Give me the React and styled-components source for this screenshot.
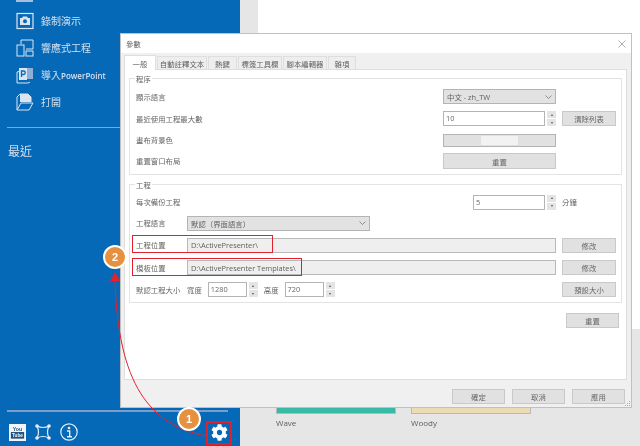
import React from 'react'
import styled, { createGlobalStyle } from 'styled-components'
import { FaCog } from 'react-icons/fa'

const Global = createGlobalStyle`
  html, body { margin: 0; padding: 0; }
  body {
    width: 640px;
    height: 446px;
    overflow: hidden;
    font-family: "Noto Sans CJK TC", "Liberation Sans", sans-serif;
  }
`

const Page = styled.div`
  position: relative;
  display: flex;
  width: 640px;
  height: 446px;
  overflow: hidden;
  background: #e6e6e6;
  filter: blur(0.3px);
`

/* left blue menu */
const Sidebar = styled.aside`
  display: flex;
  flex-direction: column;
  flex: none;
  width: 240px;
  height: 446px;
  background: #0569b7;
  color: #d3e0ef;
`

const Sliver = styled.div`
  width: 17px;
  height: 2px;
  margin: 0 0 5px 16px;
  background: #a9bfd9;
`

const MenuItem = styled.div`
  display: flex;
  align-items: center;
  gap: 7px;
  height: 27px;
  padding-left: 16px;
  font-size: 10px;
`

const Latin = styled.span`
  font-family: "Open Sans", sans-serif;
  font-size: 8px;
  font-weight: 600;
`

const MenuIcon = styled.svg`
  flex: none;
  width: 18px;
  height: 18px;
  fill: none;
  stroke: #dbe5f1;
  stroke-width: 1;
`

const Divider = styled.div`
  height: 1px;
  margin: 12px 0 0 7px;
  background: #7fa6d0;
`

const Recent = styled.div`
  margin: 14px 0 0 8px;
  font-size: 12px;
  line-height: 17px;
`

const Footer = styled.div`
  margin-top: auto;
  padding: 0 12px 0 7px;
`

const FooterLine = styled.div`
  height: 2px;
  background: #7d9cc6;
`

const FooterIcons = styled.div`
  display: flex;
  align-items: center;
  gap: 8px;
  height: 34px;
  padding: 6px 0 0 2px;
  box-sizing: border-box;
`

const FooterIcon = styled.svg`
  flex: none;
  width: 18px;
  height: 18px;
  fill: none;
  stroke: #e6edf6;
`

const YoutubeIcon = styled(FooterIcon)`
  width: 17px;
  height: 17px;
`

const Gear = styled(FaCog)`
  flex: none;
  width: 17px;
  height: 17px;
  margin-left: auto;
  color: #ffffff;
`

/* right area behind the dialog */
const Main = styled.main`
  flex: 1;
`

const WhitePanel = styled.div`
  height: 329px;
  margin-left: 18px;
  background: #ffffff;
`

const Gallery = styled.div`
  display: flex;
  gap: 15px;
  padding-left: 36px;
`

const Card = styled.div`
  width: 120px;
  color: #5c5c5c;
  font-family: "Open Sans", sans-serif;
  font-size: 8px;
`

const Thumb = styled.div`
  height: 85px;
  box-sizing: border-box;
  border: 1px solid #b9b9b9;
  background: ${p => p.$color};
  margin-bottom: 3px;
`

/* preferences dialog */
const Dialog = styled.div`
  position: absolute;
  left: 120px;
  top: 33px;
  display: flex;
  flex-direction: column;
  width: 512px;
  height: 375px;
  box-sizing: border-box;
  border: 1px solid #c0c0c0;
  background: #f0f0f0;
  color: #666666;
  font-size: 7.4px;
`

const TitleBar = styled.div`
  display: flex;
  align-items: center;
  justify-content: space-between;
  flex: none;
  height: 19px;
  padding: 0 5px;
  background: #ffffff;
`

const Close = styled.svg`
  width: 8px;
  height: 8px;
  stroke: #9a9a9a;
  stroke-width: 0.8;
`

const Content = styled.div`
  display: flex;
  flex-direction: column;
  flex: 1;
  padding: 3px 4px 0 3px;
`

const Tabs = styled.div`
  display: flex;
  align-items: flex-end;
  gap: 1px;
  height: 14px;
  margin-bottom: -1px;
  position: relative;
  z-index: 1;
`

const Tab = styled.div`
  display: flex;
  align-items: center;
  justify-content: center;
  box-sizing: border-box;
  width: ${p => p.$w}px;
  height: ${p => (p.$active ? 15 : 14)}px;
  border: 1px solid #dedede;
  border-bottom: ${p => (p.$active ? '0' : '1px solid #dedede')};
  background: ${p => (p.$active ? '#ffffff' : '#eeeeee')};
  color: #5f5f5f;
`

const Pane = styled.div`
  display: flex;
  flex-direction: column;
  height: 311px;
  box-sizing: border-box;
  border: 1px solid #dedede;
  padding: 8px 4px 0;
  background: #ffffff;
`

const Group = styled.section`
  position: relative;
  display: grid;
  grid-template-columns: ${p => p.$cols};
  grid-template-rows: ${p => p.$rows};
  column-gap: 6px;
  row-gap: 6px;
  align-items: center;
  box-sizing: border-box;
  padding: 10px 6px 5px 6px;
  margin-bottom: 9px;
  border: 1px solid #e3e3e3;
`

const Legend = styled.span`
  position: absolute;
  left: 5px;
  top: -5px;
  padding: 0 1px;
  background: #ffffff;
  line-height: 9px;
`

const Label = styled.span`
  white-space: nowrap;
  line-height: 10px;
`

const Control = styled.div`
  box-sizing: border-box;
  display: flex;
  align-items: center;
  justify-content: space-between;
  height: ${p => p.$h || 15}px;
  width: ${p => (p.$w ? `${p.$w}px` : '100%')};
  padding: 0 3px;
  border: 1px solid #b4b4b4;
  background: #e2e2e2;
  color: #5e5e5e;
  font-family: "Open Sans", "Noto Sans CJK TC", sans-serif;
  white-space: nowrap;
`

const PathField = styled(Control)`
  background: #efefef;
  border-color: #b9b9b9;
`

const Button = styled.div`
  box-sizing: border-box;
  display: flex;
  align-items: center;
  justify-content: center;
  height: ${p => p.$h || 15}px;
  width: ${p => (p.$w ? `${p.$w}px` : '100%')};
  border: 1px solid #c9c9c9;
  background: #e1e1e1;
  color: #666666;
`

const ColorField = styled(Button)`
  border-color: #b4b4b4;
`

const ColorSwatch = styled.div`
  width: 37px;
  height: 9px;
  background: #f2f2f2;
`

const SpinWrap = styled.div`
  display: flex;
  gap: 2px;
  justify-self: end;
  flex: none;
  width: ${p => (p.$w ? `${p.$w}px` : '100%')};
`

const SpinInput = styled.div`
  flex: 1;
  box-sizing: border-box;
  height: 15px;
  padding: 0 2px;
  border: 1px solid #b4b4b4;
  background: #ffffff;
  color: #666666;
  font-family: "Open Sans", sans-serif;
  line-height: 12px;
`

const SpinBtns = styled.div`
  display: flex;
  flex-direction: column;
  gap: 1px;
  flex: none;
  width: 9px;
`

const SpinBtn = styled.div`
  height: 7px;
  display: flex;
  align-items: center;
  justify-content: center;
  background: #e4e4e4;

  &::after {
    content: '';
    border-left: 1.5px solid transparent;
    border-right: 1.5px solid transparent;
    border-${p => (p.$down ? 'top' : 'bottom')}: 2px solid #555555;
  }
`

const SizeRow = styled.div`
  display: flex;
  align-items: center;
  gap: 6px;
`

const Bottom = styled.div`
  display: flex;
  justify-content: flex-end;
  gap: 7px;
  padding: 9px 2px 0 0;
`

const ResetRow = styled.div`
  display: flex;
  justify-content: flex-end;
  margin: 1px 3px 0 0;
`

const Grip = styled.svg`
  position: absolute;
  right: 0;
  bottom: 0;
  width: 6px;
  height: 6px;
  fill: #a8a8a8;
`

/* red annotations lying over the screenshot */
const Curve = styled.svg`
  position: absolute;
  left: 0;
  top: 0;
  width: 640px;
  height: 446px;
  pointer-events: none;
`

const RedBox = styled.div`
  position: absolute;
  box-sizing: border-box;
  left: ${p => p.$x}px;
  top: ${p => p.$y}px;
  width: ${p => p.$w}px;
  height: ${p => p.$h}px;
  border: ${p => p.$b || 1}px solid #e0202c;
`

const Badge = styled.div`
  position: absolute;
  left: ${p => p.$x - 12}px;
  top: ${p => p.$y - 12}px;
  display: flex;
  align-items: center;
  justify-content: center;
  box-sizing: border-box;
  width: 24px;
  height: 24px;
  border: 2px solid #ffffff;
  border-radius: 50%;
  background: #e6913f;
  color: #ffffff;
  font-family: "Liberation Sans", sans-serif;
  font-size: 11px;
  font-weight: 700;
`

const Spin = ({ value, width }) => (
  <SpinWrap $w={width}>
    <SpinInput>{value}</SpinInput>
    <SpinBtns>
      <SpinBtn />
      <SpinBtn $down />
    </SpinBtns>
  </SpinWrap>
)

const Chevron = () => (
  <svg width="7" height="4" viewBox="0 0 7 4" fill="none" stroke="#777" strokeWidth="0.8">
    <path d="M0.5 0.5 L3.5 3.5 L6.5 0.5" />
  </svg>
)

const tabs = [
  ['一般', 32],
  ['自動註釋文本', 50],
  ['熱鍵', 29],
  ['標簽工具欄', 44],
  ['腳本編輯器', 44],
  ['雜項', 28],
]

export default function App() {
  return (
    <Page>
      <Global />
      <Sidebar>
        <Sliver />
        <MenuItem>
          <MenuIcon viewBox="0 0 18 18">
            <rect x="1" y="1.500" width="16" height="15" strokeWidth="1.200" />
            <path d="M4 6h2l1-1.500h4l1 1.500h2v7h-10z" fill="#dbe5f1" stroke="none" />
            <circle cx="9" cy="9.300" r="2" fill="#0569b7" stroke="none" />
          </MenuIcon>
          錄制演示
        </MenuItem>
        <MenuItem>
          <MenuIcon viewBox="0 0 18 18">
            <path d="M5 5V1h12v9H10" />
            <rect x="1" y="6" width="7" height="11" fill="#0569b7" />
            <rect x="10" y="12" width="7" height="5" />
          </MenuIcon>
          響應式工程
        </MenuItem>
        <MenuItem>
          <MenuIcon viewBox="0 0 18 18">
            <path d="M5 5L1 6v11h11l2-1" />
            <rect x="3" y="2" width="8" height="12" fill="#dbe5f1" stroke="none" />
            <path d="M11 2h6v11h-6z" fill="#8fb0d6" stroke="none" />
            <path d="M5.500 11V5h2a1.600 1.600 0 0 1 0 3.500h-2" stroke="#0569b7" strokeWidth="1.300" />
          </MenuIcon>
          <span>導入<Latin>PowerPoint</Latin></span>
        </MenuItem>
        <MenuItem>
          <MenuIcon viewBox="0 0 18 18">
            <path d="M1 17V4l3-3h8l3 3v5" />
            <path d="M1 17h12l4-7H5z" />
            <path d="M4 1h8l3 3v5H4z" fill="#dbe5f1" stroke="none" />
          </MenuIcon>
          打開
        </MenuItem>
        <Divider />
        <Recent>最近</Recent>
        <Footer>
          <FooterLine />
          <FooterIcons>
            <YoutubeIcon viewBox="0 0 18 18">
              <rect x="0" y="0" width="18" height="18" fill="#f1f5fa" stroke="none" />
              <text x="9" y="7" fontSize="5.500" fontWeight="700" textAnchor="middle" fill="#23527f" stroke="none" fontFamily="Liberation Sans">You</text>
              <rect x="2" y="8.500" width="14" height="7" fill="#23527f" stroke="none" />
              <text x="9" y="14" fontSize="5" fontWeight="700" textAnchor="middle" fill="#f1f5fa" stroke="none" fontFamily="Liberation Sans">Tube</text>
            </YoutubeIcon>
            <FooterIcon viewBox="0 0 18 18">
              <path d="M3 3 C7 5 11 5 15 3 C13 7 13 11 15 15 C11 13 7 13 3 15 C5 11 5 7 3 3Z" strokeWidth="1.200" />
              <circle cx="3" cy="3" r="1.800" fill="#e6edf6" stroke="none" />
              <circle cx="15" cy="3" r="1.800" fill="#e6edf6" stroke="none" />
              <circle cx="3" cy="15" r="1.800" fill="#e6edf6" stroke="none" />
              <circle cx="15" cy="15" r="1.800" fill="#e6edf6" stroke="none" />
            </FooterIcon>
            <FooterIcon viewBox="0 0 18 18">
              <circle cx="9" cy="9" r="8.200" strokeWidth="1.200" />
              <circle cx="9" cy="5" r="1.300" fill="#e6edf6" stroke="none" />
              <path d="M7 8h2.700v5.500M7 13.700h5" strokeWidth="1.400" />
            </FooterIcon>
            <Gear />
          </FooterIcons>
        </Footer>
      </Sidebar>

      <Main>
        <WhitePanel />
        <Gallery>
          <Card>
            <Thumb $color="#38bba6" />
            Wave
          </Card>
          <Card>
            <Thumb $color="#ecdcb5" />
            Woody
          </Card>
        </Gallery>
      </Main>

      <Dialog>
        <TitleBar>
          參數
          <Close viewBox="0 0 8 8">
            <path d="M0.500 0.500L7.500 7.500M7.500 0.500L0.500 7.500" />
          </Close>
        </TitleBar>
        <Content>
          <Tabs>
            {tabs.map(([name, w], i) => (
              <Tab key={name} $w={w} $active={i === 0}>{name}</Tab>
            ))}
          </Tabs>
          <Pane>
            <Group $cols="301px 113px 54px" $rows="15px 17px 14px 16px">
              <Legend>程序</Legend>
              <Label>顯示語言</Label>
              <Control>中文 - zh_TW<Chevron /></Control>
              <span />
              <Label>最近使用工程最大數</Label>
              <Spin value="10" />
              <Button>清除列表</Button>
              <Label>畫布背景色</Label>
              <ColorField $h={13}><ColorSwatch /></ColorField>
              <span />
              <Label>重置窗口布局</Label>
              <Button $h={16}>重置</Button>
            </Group>
            <Group $cols="45px 369px 54px" $rows="14px 16px 16px 17px 15px">
              <Legend>工程</Legend>
              <Label>每次備份工程</Label>
              <Spin value="5" width={83} />
              <Label>分鐘</Label>
              <Label>工程語言</Label>
              <Control $w={183}>默認（界面語言）<Chevron /></Control>
              <span />
              <Label>工程位置</Label>
              <PathField>D:\ActivePresenter\</PathField>
              <Button>修改</Button>
              <Label>模板位置</Label>
              <PathField>D:\ActivePresenter Templates\</PathField>
              <Button>修改</Button>
              <Label>默認工程大小</Label>
              <SizeRow>
                <Label>寬度</Label>
                <Spin value="1280" width={50} />
                <Label>高度</Label>
                <Spin value="720" width={50} />
              </SizeRow>
              <Button>預設大小</Button>
            </Group>
            <ResetRow>
              <Button $w={53}>重置</Button>
            </ResetRow>
          </Pane>
          <Bottom>
            <Button $w={53}>確定</Button>
            <Button $w={53}>取消</Button>
            <Button $w={53}>應用</Button>
          </Bottom>
        </Content>
        <Grip viewBox="0 0 6 6">
          <rect x="4" y="0" width="1" height="1" />
          <rect x="2" y="2" width="1" height="1" />
          <rect x="4" y="2" width="1" height="1" />
          <rect x="0" y="4" width="1" height="1" />
          <rect x="2" y="4" width="1" height="1" />
          <rect x="4" y="4" width="1" height="1" />
        </Grip>
      </Dialog>

      <RedBox $x={132} $y={235} $w={141} $h={18} />
      <RedBox $x={132} $y={258} $w={170} $h={18} />
      <RedBox $x={206} $y={421} $b={2} $w={26} $h={24} />
      <Curve viewBox="0 0 640 446">
        <path d="M206 436 C150 425 118 385 115 280" fill="none" stroke="#e8202c" strokeWidth="1" />
        <path d="M115 272 L110 281 L120 281 Z" fill="#e8202c" />
      </Curve>
      <Badge $x={189} $y={419}>1</Badge>
      <Badge $x={115} $y={257}>2</Badge>
    </Page>
  )
}
